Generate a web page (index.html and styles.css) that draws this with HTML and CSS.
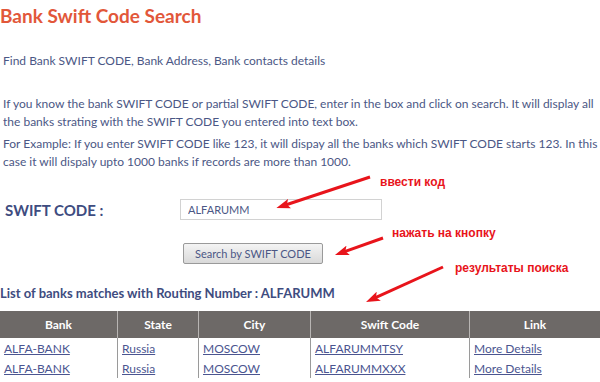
FILE: index.html
```html
<!DOCTYPE html>
<html lang="en">
<head>
    <meta charset="UTF-8">
    <meta name="viewport" content="width=device-width, initial-scale=1.0">
    <title>Bank Swift Code Search</title>
    <link rel="stylesheet" href="styles.css">
</head>
<body>
    <h1 class="title">Bank Swift Code Search</h1>
    <p class="intro">Find Bank SWIFT CODE, Bank Address, Bank contacts details</p>

    <p class="info">If you know the bank SWIFT CODE or partial SWIFT CODE, enter in the box and click on search. It will display all the banks strating with the SWIFT CODE you entered into text box.</p>
    <p class="info">For Example: If you enter SWIFT CODE like 123, it will dispay all the banks which SWIFT CODE starts 123. In this case it will dispaly upto 1000 banks if records are more than 1000.</p>

    <div class="search-row">
        <label for="swift">SWIFT CODE :</label>
        <input type="text" id="swift" value="ALFARUMM">
    </div>
    <div class="button-row">
        <button>Search by SWIFT CODE</button>
    </div>

    <h3 class="list-title">List of banks matches with Routing Number : ALFARUMM</h3>

    <table class="results">
        <tr>
            <th class="c-bank">Bank</th>
            <th class="c-state">State</th>
            <th class="c-city">City</th>
            <th class="c-code">Swift Code</th>
            <th>Link</th>
        </tr>
        <tr>
            <td><a href="#">ALFA-BANK</a></td>
            <td><a href="#">Russia</a></td>
            <td><a href="#">MOSCOW</a></td>
            <td><a href="#">ALFARUMMTSY</a></td>
            <td><a href="#">More Details</a></td>
        </tr>
        <tr>
            <td><a href="#">ALFA-BANK</a></td>
            <td><a href="#">Russia</a></td>
            <td><a href="#">MOSCOW</a></td>
            <td><a href="#">ALFARUMMXXX</a></td>
            <td><a href="#">More Details</a></td>
        </tr>
    </table>

    <!-- annotation arrows -->
    <svg class="notes" width="600" height="382" viewBox="0 0 600 382">
        <defs>
            <marker id="head" markerWidth="14" markerHeight="10" refX="6" refY="5" orient="auto" markerUnits="userSpaceOnUse">
                <path d="M0,0 L14,5 L0,10 L3,5 Z" fill="#e8141b"/>
            </marker>
        </defs>
        <line x1="370" y1="177" x2="284" y2="205.5" stroke="#e8141b" stroke-width="3" marker-end="url(#head)"/>
        <line x1="383" y1="238" x2="342.5" y2="252.3" stroke="#e8141b" stroke-width="3" marker-end="url(#head)"/>
        <line x1="443" y1="267" x2="373.3" y2="298.7" stroke="#e8141b" stroke-width="3" marker-end="url(#head)"/>
    </svg>
    <span class="note note-1">ввести код</span>
    <span class="note note-2">нажать на кнопку</span>
    <span class="note note-3">результаты поиска</span>
</body>
</html>
```

FILE: styles.css
```css
/* page */
body {
    margin: 0;
    font-family: Lato, "Open Sans", sans-serif;
    color: #4b5785;
    background-color: #fff;
    position: relative;
    width: 600px;
    height: 382px;
    overflow: hidden;
}

.title {
    margin: 4px 0 0 0;
    font-size: 19px;
    line-height: 24px;
    color: #e2573a;
}

.intro {
    margin: 24px 0 0 3px;
    font-size: 12px;
    line-height: 18px;
}

.info {
    margin: 25px 0 0 3px;
    font-size: 12px;
    line-height: 18px;
}

.info + .info {
    margin-top: 4px;
}

.search-row {
    display: flex;
    align-items: center;
    margin-top: 28px;
}

.search-row label {
    width: 180px;
    padding-left: 5px;
    box-sizing: border-box;
    font-size: 15px;
    font-weight: bold;
    color: #3e4c80;
}

.search-row input {
    width: 202px;
    height: 21px;
    box-sizing: border-box;
    padding: 0 7px;
    border: 1px solid #d2d2d2;
    font-family: inherit;
    font-size: 11px;
    color: #4b5785;
}

.button-row {
    margin: 22px 0 0 183px;
}

.button-row button {
    width: 140px;
    height: 21px;
    padding: 0;
    font-family: inherit;
    font-size: 11px;
    color: #4b5785;
    background: linear-gradient(#f4f4f4, #d9d9d9);
    border: 1px solid #9a9a9a;
    border-radius: 2px;
}

.list-title {
    margin: 20px 0 0 0;
    font-size: 13px;
    line-height: 18px;
    color: #3e4c80;
}

.results {
    margin-top: 9px;
    width: 600px;
    border-collapse: collapse;
    font-size: 12px;
}

.results th {
    height: 27px;
    background-color: #6d6967;
    color: #fff;
    font-weight: bold;
    border-left: 1px solid #b8b5b3;
    padding: 0;
}

.results th:first-child,
.results td:first-child {
    border-left: none;
}

.c-bank { width: 117px; }
.c-state { width: 80px; }
.c-city { width: 111px; }
.c-code { width: 158px; }

.results td {
    height: 20px;
    padding: 0 4px;
    border-left: 1px solid #9a9a9a;
}

.results a {
    color: #4b5590;
}

/* annotations */
.notes {
    position: absolute;
    left: 0;
    top: 0;
}

.note {
    position: absolute;
    font-family: "Liberation Sans", Arial, sans-serif;
    font-weight: bold;
    font-size: 12px;
    color: #e8141b;
    line-height: 14px;
}

.note-1 { left: 380px; top: 175px; }
.note-2 { left: 392px; top: 226px; }
.note-3 { left: 455px; top: 261px; }
```
